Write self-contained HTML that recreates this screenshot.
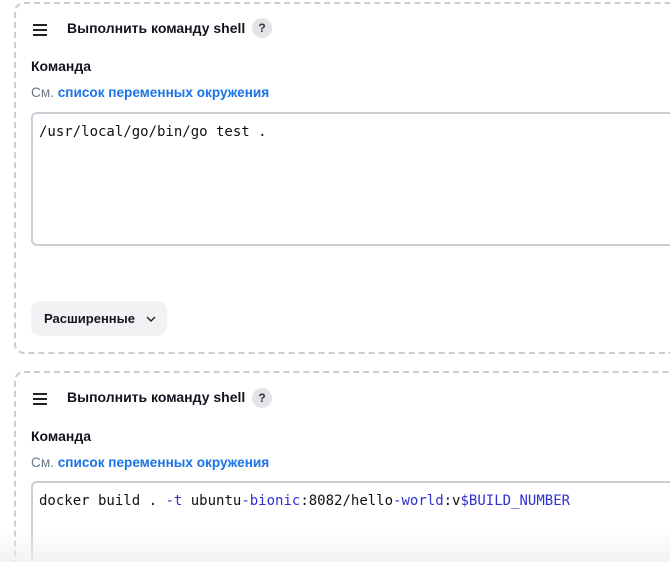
<!DOCTYPE html>
<html style="overflow:hidden;height:562px"><head><meta charset="utf-8"><style>
body{margin:0;width:670px;height:562px;overflow:hidden;background:#fff;font-family:"Liberation Sans","DejaVu Sans",sans-serif;color:#14141f;position:relative}
.card{position:absolute;left:14px;width:656px;border:2px dashed #c8ced3;border-right:none;border-radius:10px 0 0 10px;box-sizing:border-box}
.ham{position:absolute;left:33px;width:14px}
.ham i{display:block;height:2px;background:#222;margin-bottom:3px}
.t{position:absolute;font-weight:bold;font-size:14px;white-space:nowrap}
.q{position:absolute;left:252px;width:20px;height:20px;border-radius:50%;background:#e4e4e8;font-size:12px;font-weight:bold;text-align:center;line-height:20px;color:#333}
.lk{position:absolute;left:31px;font-size:13.6px;color:#6b7a8a;white-space:nowrap}
.lk b{color:#1a73e8;font-weight:bold}
.ta{position:absolute;left:31px;width:639px;border:2px solid #c8ced3;border-right:none;border-radius:6px 0 0 6px;box-sizing:border-box;font-family:"DejaVu Sans Mono",monospace;font-size:14px;padding:10px 0 0 6px;white-space:pre;color:#111;overflow:hidden}
.btn{position:absolute;left:31px;top:301px;width:136px;height:35px;border-radius:10px;background:#f2f2f5;font-size:13px;font-weight:bold;line-height:35px;padding-left:13px;box-sizing:border-box}
.b{color:#3030d0}
</style></head><body>
<div class="card" style="top:2px;height:352px"></div>
<div class="card" style="top:371px;height:191px;border-bottom:none;border-radius:10px 0 0 0"></div>

<div class="ham" style="top:24px"><i></i><i></i><i></i></div>
<div class="t" style="left:67px;top:20px">Выполнить команду shell</div>
<div class="q" style="top:18px">?</div>
<div class="t" style="left:31px;top:58px">Команда</div>
<div class="lk" style="top:85px">См. <b>список переменных окружения</b></div>
<div class="ta" style="top:112px;height:134px">/usr/local/go/bin/go test .</div>
<div class="btn">Расширенные <svg width="12" height="8" viewBox="0 0 12 8" style="margin-left:6px"><path d="M2 2l4 4 4-4" fill="none" stroke="#222" stroke-width="1.4"/></svg></div>

<div class="ham" style="top:393px"><i></i><i></i><i></i></div>
<div class="t" style="left:67px;top:389px">Выполнить команду shell</div>
<div class="q" style="top:388px">?</div>
<div class="t" style="left:31px;top:428px">Команда</div>
<div class="lk" style="top:455px">См. <b>список переменных окружения</b></div>
<div class="ta" style="top:481px;height:81px;border-bottom:none;border-radius:6px 0 0 0">docker build . <span class="b">-t</span> ubuntu<span class="b">-bionic</span>:8082/hello<span class="b">-world</span>:v<span class="b">$BUILD_NUMBER</span></div>
<div style="position:absolute;left:0;top:530px;width:670px;height:32px;background:linear-gradient(rgba(240,240,242,0),rgba(240,240,242,0.8))"></div>
</body></html>
